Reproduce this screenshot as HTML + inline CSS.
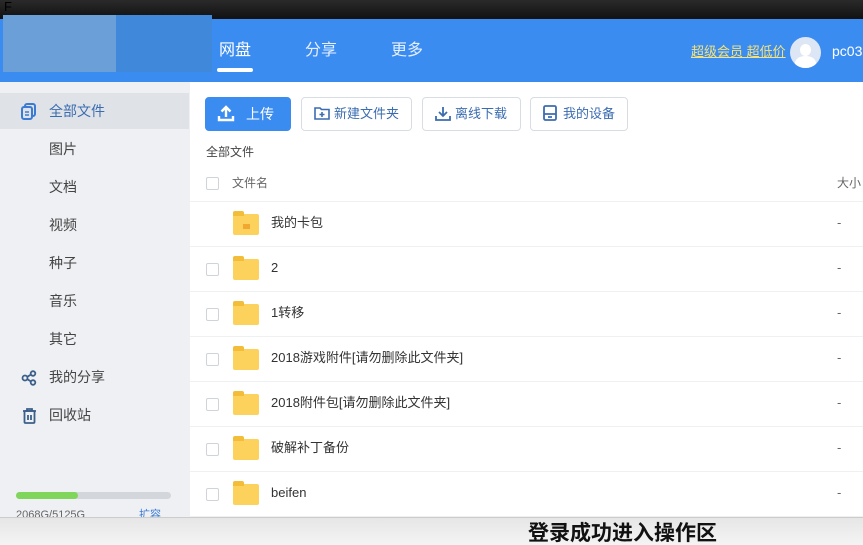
<!DOCTYPE html>
<html><head><meta charset="utf-8"><style>
*{margin:0;padding:0;box-sizing:border-box}
body{width:863px;height:545px;overflow:hidden;position:relative;background:#fff;font-family:"Liberation Sans","Noto Sans CJK SC",sans-serif;font-size:13px;color:#333;line-height:1.05}
.top{position:absolute;left:0;top:0;width:863px;height:19px;background:linear-gradient(#2a2a2a,#111)}
.hdr{position:absolute;left:0;top:19px;width:863px;height:63px;background:#3b8cf0}
.blur1{position:absolute;left:3px;top:15px;width:113px;height:57px;background:#6b9fd8}
.blur2{position:absolute;left:116px;top:15px;width:96px;height:57px;background:#3f88da}
.nav{position:absolute;top:43px;color:#fff;font-size:16px}
.sb{position:absolute;left:0;top:82px;width:190px;height:435px;background:#eef0f3}
.sb div{position:absolute;left:49px;font-size:14px;color:#444}
.sel{position:absolute;left:0;top:93px;width:189px;height:36px;background:#dfe3e8}
.btn{position:absolute;top:97px;height:34px;border:1px solid #d8dde3;border-radius:4px;font-size:13px;color:#3b6cb0;line-height:32px;padding-left:32px}
.row{position:absolute;left:190px;width:673px;height:45px;border-bottom:1px solid #eef0f2}
.cb{position:absolute;left:16px;top:16px;width:13px;height:13px;border:1px solid #cfd4da;border-radius:2px;background:#fff}
.fd{position:absolute;left:43px;top:12px;width:26px;height:21px;background:#fcd25c;border-radius:2px}
.fd:before{content:"";position:absolute;left:0;top:-3px;width:11px;height:5px;background:#f3bd3a;border-radius:2px 2px 0 0}
.nm{position:absolute;left:81px;top:14px;font-size:13px;color:#333}
.dash{position:absolute;left:647px;top:14px;color:#666}
.bot{position:absolute;left:0;top:517px;width:863px;height:28px;background:linear-gradient(#e6e6e6,#f4f4f4);border-top:1px solid #ccc}
</style></head><body>
<div class="top"></div><div style="position:absolute;left:4px;top:0;font-size:13px;color:#000">F</div>
<div class="hdr"></div>
<div class="blur1"></div><div class="blur2"></div>
<div class="nav" style="left:219px">网盘</div>
<div style="position:absolute;left:217px;top:68px;width:36px;height:4px;background:#fff;border-radius:2px"></div>
<div class="nav" style="left:305px;color:#e6efff">分享</div>
<div class="nav" style="left:391px;color:#e6efff">更多</div>
<div style="position:absolute;left:691px;top:45px;color:#f5e27a;font-size:13px;text-decoration:underline">超级会员 超低价</div>
<div style="position:absolute;left:790px;top:37px;width:31px;height:31px;border-radius:50%;background:#dde6f5;overflow:hidden"><div style="position:absolute;left:10px;top:7px;width:11px;height:12px;border-radius:50%;background:#fff"></div><div style="position:absolute;left:5px;top:19px;width:21px;height:14px;border-radius:50% 50% 0 0;background:#fff"></div></div>
<div style="position:absolute;left:832px;top:44px;color:#fff;font-size:14px">pc035</div>
<div class="sb"></div>
<div class="sel"></div>
<svg style="position:absolute;left:21px;top:103px" width="16" height="17" viewBox="0 0 16 17"><rect x="4" y="1" width="10" height="12" rx="2" fill="none" stroke="#3b7bd4" stroke-width="2"/><rect x="1" y="4" width="10" height="12" rx="2" fill="#dfe3e8" stroke="#3b7bd4" stroke-width="2"/><path d="M4 9h4M4 12h4" stroke="#3b7bd4" stroke-width="1.5"/></svg>
<div class="sb" style="background:none">
<div style="top:22px;color:#3b6cb0">全部文件</div>
<div style="top:60px">图片</div><div style="top:98px">文档</div><div style="top:136px">视频</div>
<div style="top:174px">种子</div><div style="top:212px">音乐</div><div style="top:250px">其它</div>
<div style="top:288px">我的分享</div><div style="top:326px">回收站</div>
</div>
<svg style="position:absolute;left:21px;top:370px" width="16" height="16" viewBox="0 0 16 16" fill="none" stroke="#3b5f8a" stroke-width="1.8"><circle cx="4" cy="8" r="2.5"/><circle cx="12" cy="3.5" r="2.3"/><circle cx="12" cy="12.5" r="2.3"/><path d="M6 7l4-2.5M6 9l4 2.5"/></svg>
<svg style="position:absolute;left:22px;top:408px" width="15" height="16" viewBox="0 0 15 16" fill="none" stroke="#3b5f8a" stroke-width="1.8"><path d="M1 3h13M5 3V1h5v2"/><rect x="2.5" y="3" width="10" height="12" rx="1"/><path d="M6 7v5M9 7v5"/></svg>
<div style="position:absolute;left:16px;top:492px;width:155px;height:7px;border-radius:4px;background:#d3d6da"><div style="width:62px;height:7px;border-radius:4px;background:#7fd65a"></div></div>
<div style="position:absolute;left:16px;top:510px;font-size:11px;color:#666">2068G/5125G</div>
<div style="position:absolute;left:139px;top:510px;font-size:11px;color:#3b7bd4">扩容</div>
<div class="btn" style="left:205px;width:86px;background:#3b8cf0;border-color:#3b8cf0;color:#fff;padding-left:40px;font-size:14px">上传</div>
<svg style="position:absolute;left:217px;top:104px" width="18" height="18" viewBox="0 0 18 18" fill="none" stroke="#fff" stroke-width="2.4"><path d="M9 13V3M4.5 7.5L9 3l4.5 4.5M2 12v4h14v-4"/></svg>
<div class="btn" style="left:301px;width:111px">新建文件夹</div>
<svg style="position:absolute;left:314px;top:106px" width="16" height="14" viewBox="0 0 16 14" fill="none" stroke="#3b6cb0" stroke-width="1.6"><path d="M1 2h5l1.5 1.5H15V13H1z"/><path d="M8 6v5M5.5 8.5h5"/></svg>
<div class="btn" style="left:422px;width:99px">离线下载</div>
<svg style="position:absolute;left:435px;top:105px" width="16" height="16" viewBox="0 0 16 16" fill="none" stroke="#3b6cb0" stroke-width="1.8"><path d="M8 2v9M4 7l4 4 4-4M1 11v4h14v-4"/></svg>
<div class="btn" style="left:530px;width:98px">我的设备</div>
<svg style="position:absolute;left:543px;top:105px" width="14" height="16" viewBox="0 0 14 16" fill="none" stroke="#3b6cb0" stroke-width="1.8"><rect x="1" y="1" width="12" height="14" rx="1.5"/><path d="M1 9h12M5 12h4"/></svg>
<div style="position:absolute;left:206px;top:146px;font-size:12px;color:#444">全部文件</div>
<div class="row" style="top:163px;height:39px"><div class="cb" style="top:14px"></div><div style="position:absolute;left:42px;top:14px;font-size:12px;color:#666">文件名</div><div style="position:absolute;left:647px;top:14px;font-size:12px;color:#666">大小</div></div>
<div class="row" style="top:202px"><div class="fd"></div><div style="position:absolute;left:53px;top:22px;width:7px;height:5px;background:#f0a830"></div><div class="nm">我的卡包</div><div class="dash">-</div></div>
<div class="row" style="top:247px"><div class="cb"></div><div class="fd"></div><div class="nm">2</div><div class="dash">-</div></div>
<div class="row" style="top:292px"><div class="cb"></div><div class="fd"></div><div class="nm">1转移</div><div class="dash">-</div></div>
<div class="row" style="top:337px"><div class="cb"></div><div class="fd"></div><div class="nm">2018游戏附件[请勿删除此文件夹]</div><div class="dash">-</div></div>
<div class="row" style="top:382px"><div class="cb"></div><div class="fd"></div><div class="nm">2018附件包[请勿删除此文件夹]</div><div class="dash">-</div></div>
<div class="row" style="top:427px"><div class="cb"></div><div class="fd"></div><div class="nm">破解补丁备份</div><div class="dash">-</div></div>
<div class="row" style="top:472px"><div class="cb"></div><div class="fd"></div><div class="nm">beifen</div><div class="dash">-</div></div>
<div class="bot"></div>
<div style="position:absolute;left:528px;top:523px;font-size:21px;font-weight:bold;color:#111">登录成功进入操作区</div>
</body></html>
